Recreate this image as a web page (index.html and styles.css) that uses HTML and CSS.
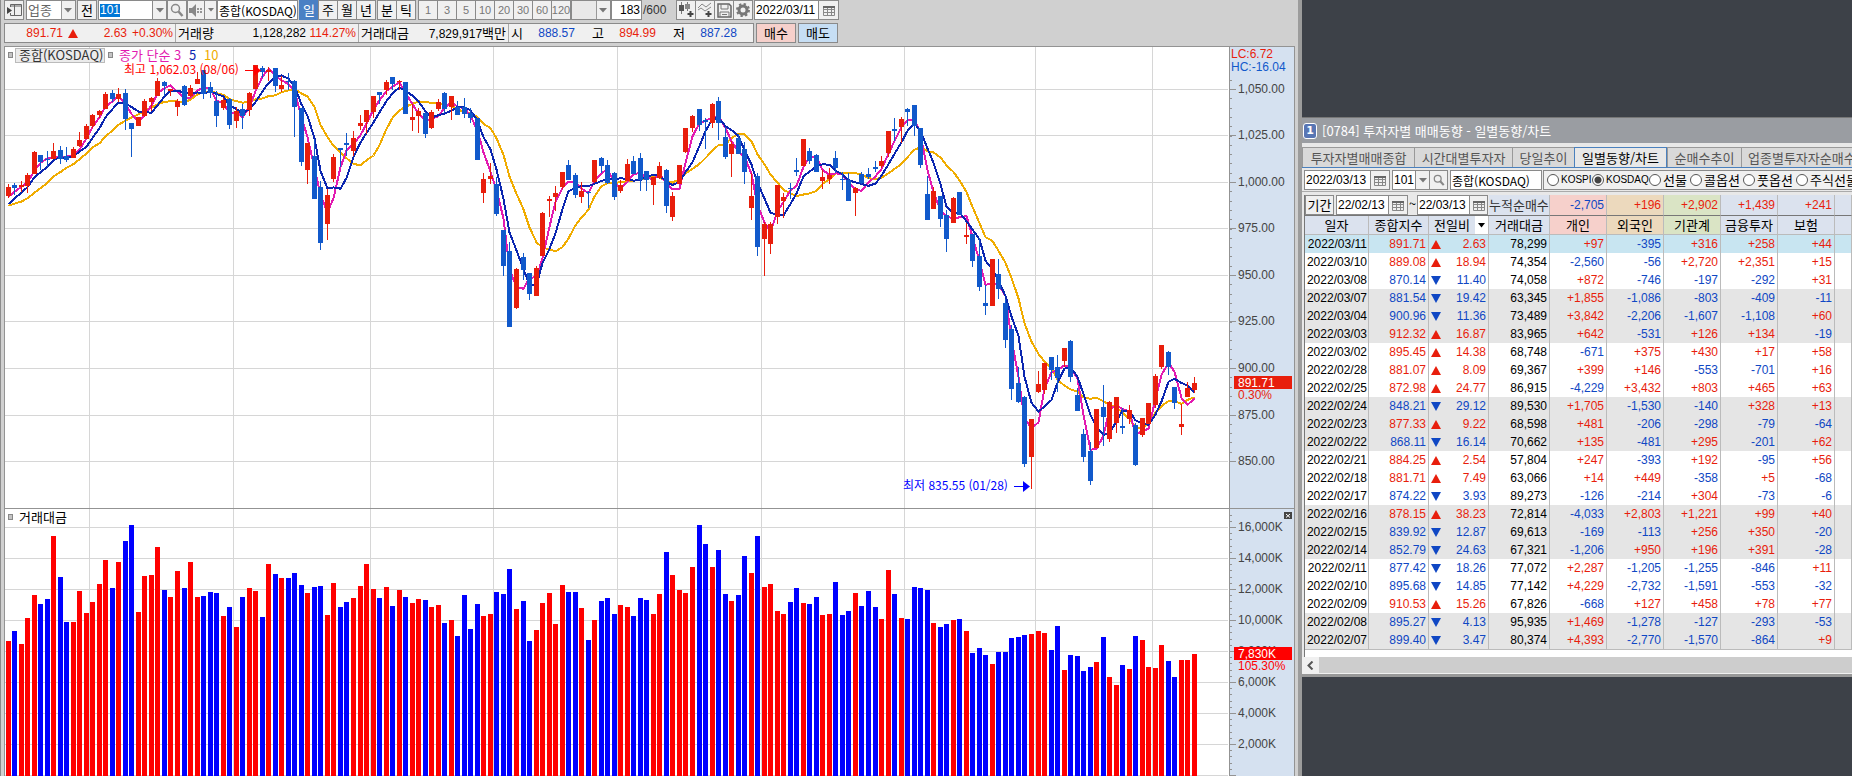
FILE: index.html
```html
<!DOCTYPE html>
<html lang="ko">
<head>
<meta charset="utf-8">
<title>종합(KOSDAQ) 차트</title>
<link rel="stylesheet" href="styles.css">
</head>
<body>
<main class="desk">
  <section class="chart-window" aria-label="업종 차트">
    <div class="toolbar">
      <button class="btn w20" aria-label="패널 열기"><svg width="15" height="14" viewBox="0 0 15 14"><path d="M3.500 4V1.500H14.500V12.500H3.500V10M7.500 2V12M3 3H15" fill="none" stroke="#666"/><path d="M0 4V11L5 7.500Z" fill="#444"/></svg></button>
      <select class="field pick w50 gap2 dim" aria-label="구분"><option>업종</option></select>
      <button class="btn w20 gap1">전</button>
      <input class="field code w55 gap1" aria-label="종목코드" value="101"><button class="btn w14 join" aria-label="코드 목록"><svg width="8" height="5" viewBox="0 0 8 5"><path d="M0 0H8L4 4.500Z" fill="#777"/></svg></button>
      <button class="btn w20" aria-label="검색"><svg width="14" height="14" viewBox="0 0 14 14"><circle cx="5.500" cy="5.500" r="4" fill="none" stroke="#888" stroke-width="1.500"/><path d="M8.500 8.500L12.500 13" stroke="#888" stroke-width="2.500"/></svg></button>
      <button class="btn w18" aria-label="소리"><svg width="14" height="13" viewBox="0 0 14 13"><path d="M0 4H3L7 0V13L3 9H0Z" fill="#888"/><path d="M9 4V6M9 7V9M12 4V6M12 7V9" stroke="#777" stroke-width="1.500"/></svg></button><button class="btn w12 join" aria-label="소리 설정"><svg width="6" height="4" viewBox="0 0 6 4"><path d="M0 0H6L3 3.500Z" fill="#777"/></svg></button>
      <input class="field small w81" aria-label="종목명" value="종합(KOSDAQ)">
      <div class="group gap1"><button class="btn w20 on">일</button><button class="btn w20">주</button><button class="btn w20">월</button><button class="btn w20">년</button></div>
      <div class="group gap1"><button class="btn w20">분</button><button class="btn w20">틱</button></div>
      <div class="group gap2 minutes"><button class="btn w20">1</button><button class="btn w20">3</button><button class="btn w20">5</button><button class="btn w20">10</button><button class="btn w20">20</button><button class="btn w20">30</button><button class="btn w20">60</button><button class="btn w20">120</button></div>
      <select class="field pick empty w40" aria-label="주기"><option></option></select>
      <input class="field num right w31" aria-label="표시 개수" value="183"><span class="total">/600</span>
      <div class="group"><button class="btn w20" aria-label="지표 추가"><svg width="16" height="16" viewBox="0 0 16 16"><path d="M3.500 0V12M9.500 0V9" stroke="#777"/><path d="M1 3H6V9H1Z" fill="#555"/><path d="M7 2H12V7H7Z" fill="#888"/><path d="M12.500 9V15M9.500 12H15.500" stroke="#444" stroke-width="2"/></svg></button><button class="btn w20" aria-label="추세선 추가"><svg width="16" height="16" viewBox="0 0 16 16"><path d="M1 6L5 2L9 5L14 1M1 8L4 6L8 9L14 5" fill="none" stroke="#888"/><path d="M11.500 9V15M8.500 12H14.500" stroke="#444" stroke-width="2"/></svg></button><button class="btn w20" aria-label="저장"><svg width="15" height="15" viewBox="0 0 15 15"><path d="M1 1H12L14 3V14H1Z" fill="none" stroke="#666" stroke-width="1.500"/><path d="M4 1V6H11V1M3 14V9H12V14M5 11.500H10" fill="none" stroke="#777"/></svg></button><button class="btn w20" aria-label="설정"><svg width="14" height="14" viewBox="0 0 14 14"><circle cx="7" cy="7" r="4" fill="none" stroke="#777" stroke-width="3"/><circle cx="7" cy="7" r="6" fill="none" stroke="#777" stroke-width="2" stroke-dasharray="2.350 2.350"/></svg></button></div>
      <input class="field num w65 gap1" aria-label="날짜" value="2022/03/11"><button class="btn w20 join" aria-label="달력"><svg width="12" height="11" viewBox="0 0 12 11"><path d="M.500 1V10.500H11.500V1M.500 4.500H11.500M.500 7.500H11.500M4.500 3V10M8.500 3V10" fill="none" stroke="#888"/><path d="M0 1H12V3H0Z" fill="#666"/></svg></button>
    </div>
    <div class="quote-row">
      <div class="quote">
        <span class="up q58">891.71</span><svg class="quote-mark" width="10" height="9" viewBox="0 0 10 9"><path d="M5 0L10 9H0Z" fill="#e81e0c"/></svg><span class="up q49">2.63</span><span class="up q49 cut">+0.30%</span>
        <b class="q39">거래량</b><span class="q91">1,128,282</span><span class="up q53 cut">114.27%</span>
        <b class="q50">거래대금</b><span class="q100 cut">7,829,917<b>백만</b></span>
        <b>시</b><span class="down q52">888.57</span><b class="wide">고</b><span class="up q52">894.99</span><b class="wide">저</b><span class="down q52">887.28</span>
      </div>
      <button class="trade buy">매수</button>
      <button class="trade sell">매도</button>
    </div>
    <svg class="chart" id="chart" viewBox="4 46 1291 730" role="img" aria-label="종합(KOSDAQ) 일봉과 거래대금">
      <rect x="4" y="46" width="1291" height="730" fill="#fff"/>
      <rect x="1230" y="46" width="64" height="730" fill="#d5e1f0"/>
      <g id="grid" class="crisp"></g>
      <g id="volume" class="crisp"></g>
      <g id="averages" class="crisp averages"></g>
      <g id="candles" class="crisp"></g>
      <g class="crisp" fill="#939393">
        <rect x="4" y="46" width="1291" height="1"/><rect x="4" y="46" width="1" height="730"/>
        <rect x="1294" y="46" width="1" height="730"/><rect x="1229" y="46" width="1" height="730"/>
        <rect x="5" y="508" width="1290" height="1"/>
      </g>
      <g class="crisp" fill="#c4c4c4" stroke="#888">
        <rect x="8.500" y="52.500" width="4" height="5"/><rect x="108.500" y="52.500" width="4" height="5"/><rect x="8.500" y="514.500" width="4" height="5"/>
        <rect x="15.500" y="48.500" width="89" height="14" fill="#ebebeb" stroke="#bbb"/>
      </g>
      <text class="legend" x="19" y="60" fill="#333">종합(KOSDAQ)</text>
      <text class="legend" x="119" y="60" fill="#e21ab0">종가 단순 3</text>
      <text class="legend" x="189" y="60" fill="#0b26b0">5</text>
      <text class="legend" x="204" y="60" fill="#f0ac00">10</text>
      <text class="note" x="124" y="74" fill="#f00">최고 1,062.03 (08/06)</text>
      <path d="M245 70.500H256" stroke="#f00"/><path d="M254 65L261 70.500L254 76Z" fill="#f00"/>
      <text class="note" x="903" y="490" fill="#00f">최저 835.55 (01/28)</text>
      <path d="M1014 486.500H1025" stroke="#00f"/><path d="M1023 481L1030 486.500L1023 492Z" fill="#00f"/>
      <text class="legend" x="19" y="522" fill="#000">거래대금</text>
      <g id="axis" class="axis"></g>
      <text class="axis-text" x="1231" y="58" fill="#e81e0c">LC:6.72</text>
      <text class="axis-text" x="1231" y="71" fill="#1159cb">HC:-16.04</text>
      <rect x="1234" y="376" width="58" height="13" fill="#e81e0c"/>
      <text class="axis-text" x="1238" y="387" fill="#fff">891.71</text>
      <text class="axis-text" x="1238" y="399" fill="#e81e0c">0.30%</text>
      <rect x="1234" y="647" width="58" height="13" fill="#f00"/>
      <text class="axis-text" x="1238" y="658" fill="#fff">7,830K</text>
      <text class="axis-text" x="1238" y="670" fill="#f00">105.30%</text>
      <rect x="1284" y="512" width="8" height="7" fill="#444"/><path d="M1286 514L1290 517.500M1290 514L1286 517.500" stroke="#fff"/>
    </svg>
  </section>

  <section class="side">
    <div class="trend-window">
      <h1 class="title"><span class="badge">1</span>[0784] 투자자별 매매동향 - 일별동향/차트</h1>
      <nav class="tabs">
        <button class="tab t112">투자자별매매종합</button><button class="tab t98">시간대별투자자</button><button class="tab t62">당일추이</button><button class="tab t92 current">일별동향/차트</button><button class="tab t74">순매수추이</button><button class="tab last">업종별투자자순매수</button>
      </nav>
      <div class="filters">
        <input class="field num w67" aria-label="기준일" value="2022/03/13"><button class="btn w19 join" aria-label="기준일 달력"><svg width="12" height="11" viewBox="0 0 12 11"><path d="M.500 1V10.500H11.500V1M.500 4.500H11.500M.500 7.500H11.500M4.500 3V10M8.500 3V10" fill="none" stroke="#888"/><path d="M0 1H12V3H0Z" fill="#666"/></svg></button>
        <input class="field num w24 gap2" aria-label="업종코드" value="101"><button class="btn w14 join" aria-label="업종 목록"><svg width="8" height="5" viewBox="0 0 8 5"><path d="M0 0H8L4 4.500Z" fill="#777"/></svg></button><button class="btn w18 join" aria-label="업종 검색"><svg width="12" height="12" viewBox="0 0 14 14"><circle cx="5.500" cy="5.500" r="4" fill="none" stroke="#888" stroke-width="1.500"/><path d="M8.500 8.500L12.500 13" stroke="#888" stroke-width="2.500"/></svg></button>
        <input class="field small w92 gap2" aria-label="업종명" value="종합(KOSDAQ)">
        <div class="radios gap1">
          <label class="latin r46"><input type="radio" name="market">KOSPI</label><label class="latin r54"><input type="radio" name="market" checked>KOSDAQ</label><label class="r41"><input type="radio" name="market">선물</label><label class="r53"><input type="radio" name="market">콜옵션</label><label class="r53"><input type="radio" name="market">풋옵션</label><label><input type="radio" name="market">주식선물</label>
        </div>
      </div>
      <div class="table-wrap">
      <table class="trend">
        <colgroup><col class="c64"><col class="c60"><col class="c60"><col class="c61"><col class="c57"><col class="c57"><col class="c57"><col class="c57"><col class="c57"><col></colgroup>
        <thead>
          <tr class="sums">
            <td colspan="3" class="period"><div class="period-row"><button class="btn w29">기간</button><input class="field num w53 gap2" aria-label="시작일" value="22/02/13"><button class="btn w19 join" aria-label="시작일 달력"><svg width="12" height="11" viewBox="0 0 12 11"><path d="M.500 1V10.500H11.500V1M.500 4.500H11.500M.500 7.500H11.500M4.500 3V10M8.500 3V10" fill="none" stroke="#888"/><path d="M0 1H12V3H0Z" fill="#666"/></svg></button><span class="tilde">~</span><input class="field num w53" aria-label="종료일" value="22/03/13"><button class="btn w18 join" aria-label="종료일 달력"><svg width="12" height="11" viewBox="0 0 12 11"><path d="M.500 1V10.500H11.500V1M.500 4.500H11.500M.500 7.500H11.500M4.500 3V10M8.500 3V10" fill="none" stroke="#888"/><path d="M0 1H12V3H0Z" fill="#666"/></svg></button></div></td>
            <td class="sum-label">누적순매수</td><td class="pink down">-2,705</td><td class="tan up">+196</td><td class="green up">+2,902</td><td class="up">+1,439</td><td class="up">+241</td><td></td>
          </tr>
          <tr class="heads">
            <th>일자</th><th>종합지수</th><th class="diff"><div class="diff-row"><span>전일비</span><button class="drop" aria-label="전일비 선택"><svg width="7" height="5" viewBox="0 0 7 5"><path d="M0 0H7L3.500 4.500Z" fill="#000"/></svg></button></div></th><th>거래대금</th><th class="pink">개인</th><th class="tan">외국인</th><th class="green">기관계</th><th>금융투자</th><th>보험</th><th></th>
          </tr>
        </thead>
        <tbody id="rows"></tbody>
      </table>
      </div>
      <div class="scroll"><button class="scroll-btn" aria-label="왼쪽으로"><svg width="7" height="9" viewBox="0 0 7 9"><path d="M5.500 .500L1.500 4.500L5.500 8.500" fill="none" stroke="#555" stroke-width="2"/></svg></button></div>
    </div>
  </section>
</main>
<script src="app.js"></script>
</body>
</html>
```
FILE: styles.css
```css
:root {
  --num: "Liberation Sans", "Noto Sans CJK KR", sans-serif;
  --ko: "Noto Sans CJK KR", sans-serif;
  --up: #e81e0c;
  --down: #0f47c4;
  --edge: #8a8a8a;
}
* { box-sizing: border-box; }
body { margin: 0; background: #3d4148; font-family: var(--ko); font-size: 13px; color: #000; }
input, button, select { font-family: inherit; font-size: inherit; color: inherit; margin: 0; }
.desk { display: grid; grid-template-columns: 1302fr 550fr; min-height: 100vh; }
.up { color: var(--up); }
.down { color: var(--down); }

.chart-window { min-width: 0; background: #d0d0d0; border-left: 1px solid #8c8c8c; border-right: 4px solid #9c9c9c; padding: 0 3px; overflow: hidden; }
.toolbar { display: flex; height: 20px; }
.group { display: flex; }
.group .btn + .btn { margin-left: -1px; }
.btn { flex: none; height: 20px; padding: 0; display: flex; align-items: center; justify-content: center; background: #f0f0f0; border: 1px solid var(--edge); line-height: 16px; }
.btn.on { background: #4a80c4; color: #fff; border-color: #4a80c4; }
.join { border-left-width: 0; }
.minutes .btn { color: #777; font-family: var(--num); font-size: 11px; }
.field { flex: none; height: 20px; padding: 0 1px; background: #fff; border: 1px solid var(--edge); border-radius: 0; line-height: 16px; }
.num { font-family: var(--num); font-size: 12px; }
.small { font-size: 12px; }
.right { text-align: right; }
.dim { color: #666; }
.pick { appearance: none; background: #fff url("data:image/svg+xml,%3Csvg xmlns='http://www.w3.org/2000/svg' width='14' height='18'%3E%3Cpath d='M0 0H14V18H0Z' fill='%23f0f0f0'/%3E%3Cpath d='M0 0H1V18H0Z' fill='%23999'/%3E%3Cpath d='M3 7H11L7 11.500Z' fill='%23777'/%3E%3C/svg%3E") no-repeat right top / 14px 18px; }
.empty { background-color: #e9e9e9; }
.code { font-family: var(--num); font-size: 12px; color: #fff; background: linear-gradient(#0078d7, #0078d7) no-repeat 1px 3px / 20px 13px #fff; }
.total { width: 34px; padding-left: 1px; line-height: 20px; color: #333; font-family: var(--num); font-size: 12px; }
.gap1 { margin-left: 1px; }
.gap2 { margin-left: 2px; }
.w12 { width: 12px; } .w14 { width: 14px; } .w18 { width: 18px; } .w19 { width: 19px; } .w20 { width: 20px; }
.w24 { width: 24px; } .w29 { width: 29px; } .w31 { width: 31px; } .w40 { width: 40px; } .w50 { width: 50px; }
.w53 { width: 53px; } .w55 { width: 55px; } .w65 { width: 65px; } .w67 { width: 67px; } .w81 { width: 81px; } .w92 { width: 92px; }

.quote-row { display: flex; height: 20px; margin: 3px 0; gap: 2px; }
.quote { display: flex; align-items: center; width: 750px; border: 1px solid var(--edge); background: #f0f0f0; font-family: var(--num); font-size: 12px; line-height: 18px; }
.quote span { text-align: right; white-space: nowrap; height: 18px; }
.quote b { font-family: var(--ko); font-weight: 400; font-size: 13px; padding-left: 2px; white-space: nowrap; }
.quote span b { padding: 0; }
.quote .wide { padding-left: 17px; }
.quote-mark { margin-left: 5px; }
.cut { border-right: 1px solid #aaa; padding-right: 2px; }
.q39 { width: 39px; } .q49 { width: 49px; } .q50 { width: 50px; } .q52 { width: 52px; } .q53 { width: 53px; }
.q58 { width: 58px; } .q91 { width: 91px; } .q100 { width: 100px; }
.trade { width: 40px; height: 20px; padding: 0; border: 1px solid var(--edge); line-height: 16px; }
.buy { background: #f6d0cb; }
.sell { background: #c6def4; }

.chart { display: block; width: 100%; height: auto; }
.crisp { shape-rendering: crispEdges; }
.averages path { fill: none; stroke-width: 2; }
.legend { font-family: var(--ko); font-size: 13px; }
.note { font-family: var(--ko); font-size: 12px; }
.axis text, .axis-text { font-family: var(--num); font-size: 12px; }
.axis text { fill: #444; }

.side { min-width: 0; overflow: hidden; padding-top: 117px; }
.trend-window { background: #e8e8e8; border-top: 1px solid #777; border-bottom: 3px solid #989898; }
.title { margin: 0; height: 25px; padding-left: 1px; display: flex; align-items: center; gap: 5px; background: #9a9da2; color: #fff; font-size: 13px; font-weight: 400; white-space: nowrap; }
.badge { width: 14px; height: 16px; border: 1px solid #fff; border-radius: 3px; background: #5876b4; font: 700 11px/14px "DejaVu Sans", sans-serif; text-align: center; }
.tabs { display: flex; margin-top: 4px; height: 21px; border-bottom: 1px solid #4a80bd; overflow: hidden; }
.tab { flex: none; height: 21px; padding: 0; background: #d9d9d9; border: 1px solid #999; border-right: 0; border-bottom: 1px solid #4a80bd; color: #555; line-height: 18px; white-space: nowrap; }
.tab.current { background: #e8e8e8; border: 1px solid #4a80bd; border-bottom: 0; color: #000; }
.t62 { width: 62px; } .t74 { width: 74px; } .t92 { width: 93px; } .t98 { width: 98px; } .t112 { width: 112px; }
.tab.last { padding: 0 6px; border-right: 1px solid #999; }
.filters { display: flex; height: 24px; padding: 2px 0 0 2px; border-bottom: 1px solid #aaa; }
.radios { display: flex; flex: none; align-items: center; height: 20px; padding: 0 3px; border: 1px solid var(--edge); background: #f0f0f0; }
.radios label { display: flex; align-items: center; gap: 2px; white-space: nowrap; line-height: 16px; }
.radios .latin { font-family: var(--num); font-size: 10px; }
.radios input { flex: none; appearance: none; width: 12px; height: 12px; border: 1px solid #555; border-radius: 50%; background: #fff; }
.radios input:checked { background: radial-gradient(circle, #444 3px, #fff 4px); }
.r41 { width: 41px; } .r46 { width: 45px; } .r53 { width: 53px; } .r54 { width: 57px; }

.table-wrap { margin: 3px 0 0 2px; height: 462px; border-left: 1px solid #777; background: #fff; overflow: hidden; }
.trend { table-layout: fixed; width: 100%; border-collapse: separate; border-spacing: 0; font-family: var(--num); font-size: 12px; }
.trend td, .trend th { height: 18px; padding: 0 2px; border-right: 1px solid #bbb; text-align: right; line-height: 18px; font-weight: 400; white-space: nowrap; overflow: hidden; }
.trend td:first-child { padding: 0 1px; }
.trend thead td, .trend thead th { background: #dbe2ee; }
.trend .sums td { height: 21px; border-bottom: 1px solid #777; }
.trend .heads th { height: 19px; padding: 0; text-align: center; font-family: var(--ko); font-size: 13px; border-bottom: 1px solid #bbb; }
.trend thead .period { padding: 0; border-right: 0; background: #e8e8e8; }
.period-row { display: flex; height: 20px; font-family: var(--ko); font-size: 13px; }
.tilde { width: 9px; text-align: center; }
.trend .sum-label { font-family: var(--ko); font-size: 13px; padding: 0; text-align: left; color: #333; }
.trend thead .pink { background: #f6d0cb; }
.trend thead .tan { background: #ecd9bd; }
.trend thead .green { background: #dae4c5; }
.diff-row { display: flex; justify-content: space-between; padding-left: 5px; }
.drop { width: 13px; height: 18px; padding: 0; border: 0; background: #fff; }
.drop svg { display: block; margin: auto; }
.trend .today td { background: #c8e5f1; }
.shade td { background: #e5e5e5; }
.trend tbody tr:last-child td { border-bottom: 1px solid #bbb; }
.change { display: flex; align-items: center; justify-content: space-between; }
.c57 { width: 57px; } .c60 { width: 60px; } .c61 { width: 61px; } .c64 { width: 64px; }
.scroll { height: 17px; background: #cdcdcd; border-bottom: 1px solid #f0f0f0; }
.scroll-btn { display: block; width: 17px; height: 16px; padding: 0; border: 0; background: #f0f0f0; }
.scroll-btn svg { display: block; margin: auto; }
```
FILE: app.js
```js
const RED = '#e81e0c', BLUE = '#1159cb';
const NS = 'http://www.w3.org/2000/svg';
const byId = id => document.getElementById(id);

function add(parent, name, attrs, text) {
  const el = document.createElementNS(NS, name);
  for (const key in attrs) el.setAttribute(key, attrs[key]);
  if (text) el.textContent = text;
  parent.appendChild(el);
}
const box = (parent, x, y, w, h, fill) => add(parent, 'rect', { x, y, width: w, height: h, fill });
const barX = i => Math.floor(6 + i * 6.519);

/* Each candle: direction, then high, body top, body bottom, low; three units per pixel under the base line. */
const segments = [
  { base: 40, data: `R432,441,467,473 B430,435,443,465 R423,435,440,455 R400,405,437,459 R333,336,402,402 B346,346,366,390 B333,357,361,381 R309,333,356,356 B318,330,356,372 B321,348,360,366
R321,327,353,353 R276,300,318,320 R252,258,297,297 R222,225,257,264 R210,213,225,233 R156,162,207,207 B150,159,177,186 R144,162,177,186 B147,159,237,270 B249,249,267,351
R231,231,258,258 R177,183,228,231 R171,174,185,212 R114,123,168,168 B123,126,137,168 R147,147,153,168 R177,183,201,228 B135,138,195,198 R135,144,168,171 R96,117,132,132
B90,90,161,177 B126,141,159,174 B153,183,228,261 R174,180,204,210 B174,177,255,267 R201,213,243,264 B192,207,228,267 R156,159,210,228 R75,75,147,147 B78,84,95,113
R81,90,95,123 B84,84,137,155 R108,135,147,156 B99,122,125,150 B120,123,201,291 B204,204,366,378 R309,309,390,432 B297,348,477,477 B423,441,609,630 R447,465,552,600
R342,351,417,426 B324,325,329,381 B279,310,314,348 R273,294,333,348 R225,249,258,270 R210,210,246,282 R168,168,216,234 B155,156,164,192 R120,126,150,165 B111,111,132,150
R120,123,127,150 B126,126,222,222 R192,231,240,273 R204,213,228,279 B216,219,282,294 R210,216,264,267 R177,186,207,213 B156,159,207,219 R168,168,201,240 B183,201,225,225
B174,201,222,234 B204,219,234,249 B234,234,360,360 R399,417,459,489 R369,408,417,432 B411,432,522,528 B570,570,678,708 B606,633,861,861 R684,687,804,807 B639,651,690,720
B699,699,762,780 R678,684,768,768 R516,519,648,648 R468,477,482,531 R438,459,471,513 R396,396,441,446 B360,375,420,420 B399,405,465,474 R426,453,471,489 B453,455,459,504
R360,360,426,429 B351,354,378,399 B360,375,429,432 B396,399,471,480 R420,435,453,459 R357,372,423,423 B348,363,402,402 B339,354,420,453 B393,393,420,453 R411,411,435,495
R366,378,413,416 B387,390,498,519 R456,468,531,543 R375,375,432,432 R264,264,336,339 R225,228,264,276 B207,207,255,273 B234,240,246,327 R189,192,249,264 B171,183,249,300
B261,291,351,357 R303,312,342,411 B282,294,342,342 B306,327,396,432 R399,468,504,540 B399,408,621,648 R546,552,598,708 R546,552,612,642 R435,435,531,552 R459,471,483,534
B429,444,447,477 B354,390,396,408 R297,297,378,378 B324,333,363,372 B342,345,396,396 R390,411,423,447 R384,405,417,432 B333,354,384,399 B396,418,420,450 B399,420,483,483
R441,444,459,528 B396,402,429,432 B384,402,411,417 B363,381,387,396 R348,363,378,384 R273,273,339,351 B234,267,273,303 R231,237,261,309 B204,207,216,258 B195,195,258,288
B264,264,375,384 B408,462,540,540 R441,453,507,507 B468,468,537,561 B510,525,597,636 R471,474,549,549 B456,456,525,525 R549,585,591,612 B582,582,663,681 B594,648,741,753
B735,789,798,825 R657,657,798,798 B657,702,747,777 B777,789,900,924` },
  { base: 320, data: `B15,27,207,240 B141,189,246,249 B228,231,432,441 R297,297,411,507 R153,192,216,219 R129,129,210,222 B111,111,150,180 B105,141,174,216 R84,84,123,141 B60,63,171,186
B204,225,273,273 B327,342,411,426 B366,393,483,495 R267,267,384,384 B195,261,291,378 R243,246,357,366 R231,231,309,339 B264,318,324,342 R255,270,297,312 B309,315,435,438
R294,294,345,351 R249,249,312,312 R162,168,255,264 R75,75,141,147 B93,96,141,165 B201,201,249,267 R252,312,321,345 R186,204,231,231 R171,189,210,219` }
];
const candles = segments.flatMap(s => s.data.split(/\s+/).map(t => {
  const [high, top, bottom, low] = t.slice(1).split(',').map(v => s.base + v / 3);
  return { up: t[0] === 'R', high, top, bottom, low, close: t[0] === 'R' ? top : bottom };
}));

/* Volume bars: colour and top edge, three units per pixel under y = 500. */
const volumes = `R423 B393 R432 R354 R285 B312 B297 R108 B231 B366 R366 R273 R339 R306 R252 R180 B264 R186 B123 B75
R336 R228 R225 R141 B270 R291 R213 B264 R186 R291 B288 B276 B279 R348 B321 R381 B291 R264 R273 B351
R192 B222 R234 B234 B219 B255 R279 B261 B258 R345 R249 B321 B306 R294 R258 R192 R267 B294 R261 B318
R270 B291 R309 R297 B300 R321 R315 B369 R360 B408 B285 B387 B312 R348 R342 B276 B282 B207 R327 B303
B423 R390 R309 R279 R372 R255 B276 B276 R324 B420 R360 B303 B294 B342 R315 R321 B348 B294 B300 R342
R282 B156 R225 R270 R279 R201 B75 B132 R201 B150 B282 R303 B285 B168 R219 B108 R261 R252 R333 R342
B306 B264 R309 B312 B291 R345 R342 B246 B345 B333 R279 B318 B273 B321 R357 R210 B282 R354 B357 B261
B264 B270 R369 B381 B372 R360 B357 R393 B459 B444 B465 R492 B456 B456 B414 B411 B405 R402 R393 R399
B450 B378 R510 B465 B468 B513 B501 R486 B411 R531 R555 B495 R507 B408 R420 R501 R504 R435 B483 B531
R480 R480 R462`.split(/\s+/);

const grid = byId('grid'), axis = byId('axis');
const priceLines = [[89, '1,050.00'], [135, '1,025.00'], [182, '1,000.00'], [228, '975.00'], [275, '950.00'], [321, '925.00'], [368, '900.00'], [415, '875.00'], [461, '850.00']];
const volumeLines = [[527, '16,000K'], [558, '14,000K'], [589, '12,000K'], [620, '10,000K'], [651, '8,000K'], [682, '6,000K'], [713, '4,000K'], [744, '2,000K'], [775, '']];
[89, 233, 370, 493, 617, 761, 904, 1035, 1152].forEach(x => box(grid, x, 47, 1, 729, '#d6d6d6'));
[...priceLines, ...volumeLines].forEach(([y, label]) => {
  box(grid, 5, y, 1223, 1, '#d6d6d6');
  box(grid, 1230, y, 6, 1, '#939393');
  add(axis, 'text', { x: 1238, y: y + 4 }, label);
});
for (let k = -1; k <= 40; k++) box(grid, 1230, Math.round(89 + k * 9.3), 2, 1, '#939393');
for (let k = -3; k <= 40; k++) box(grid, 1230, Math.round(527 + k * 6.2), 2, 1, '#939393');

volumes.forEach((v, i) => {
  const top = 500 + v.slice(1) / 3;
  box(byId('volume'), barX(i), top, 5, 776 - top, v[0] === 'R' ? '#f00' : '#00f');
});

/* Closes of the nine sessions before the first visible candle. */
const earlier = [502, 502, 502, 502, 502, 525, 525, 485, 484].map(v => 40 + v / 3);
const closes = [...earlier, ...candles.map(c => c.close)];
[[10, '#f0ac00'], [3, '#e21ab0'], [5, '#0b26b0']].forEach(([n, stroke]) => {
  const points = candles.map((c, i) => {
    const end = i + earlier.length + 1;
    const mean = closes.slice(end - n, end).reduce((a, b) => a + b) / n;
    return (barX(i) + 2.5) + ' ' + mean.toFixed(1);
  });
  add(byId('averages'), 'path', { d: 'M' + points.join('L'), stroke });
});

candles.forEach((c, i) => {
  const x = barX(i), fill = c.up ? RED : BLUE, g = byId('candles');
  const top = Math.round(c.top), high = Math.round(c.high);
  box(g, x + 2, high, 1, Math.round(c.low) - high, fill);
  box(g, x, top, 5, Math.max(1, Math.round(c.bottom) - top), fill);
});

const rows = `03/11 891.71 u 2.63 78,299 +97 -395 +316 +258 +44
03/10 889.08 u 18.94 74,354 -2,560 -56 +2,720 +2,351 +15
03/08 870.14 d 11.40 74,058 +872 -746 -197 -292 +31
03/07 881.54 d 19.42 63,345 +1,855 -1,086 -803 -409 -11
03/04 900.96 d 11.36 73,489 +3,842 -2,206 -1,607 -1,108 +60
03/03 912.32 u 16.87 83,965 +642 -531 +126 +134 -19
03/02 895.45 u 14.38 68,748 -671 +375 +430 +17 +58
02/28 881.07 u 8.09 69,367 +399 +146 -553 -701 +16
02/25 872.98 u 24.77 86,915 -4,229 +3,432 +803 +465 +63
02/24 848.21 d 29.12 89,530 +1,705 -1,530 -140 +328 +13
02/23 877.33 u 9.22 68,598 +481 -206 -298 -79 -64
02/22 868.11 d 16.14 70,662 +135 -481 +295 -201 +62
02/21 884.25 u 2.54 57,804 +247 -393 +192 -95 +56
02/18 881.71 u 7.49 63,066 +14 +449 -358 +5 -68
02/17 874.22 d 3.93 89,273 -126 -214 +304 -73 -6
02/16 878.15 u 38.23 72,814 -4,033 +2,803 +1,221 +99 +40
02/15 839.92 d 12.87 69,613 -169 -113 +256 +350 -20
02/14 852.79 d 24.63 67,321 -1,206 +950 +196 +391 -28
02/11 877.42 d 18.26 77,072 +2,287 -1,205 -1,255 -846 +11
02/10 895.68 d 14.85 77,142 +4,229 -2,732 -1,591 -553 -32
02/09 910.53 u 15.26 67,826 -668 +127 +458 +78 +77
02/08 895.27 d 4.13 95,935 +1,469 -1,278 -127 -293 -53
02/07 899.40 d 3.47 80,374 +4,393 -2,770 -1,570 -864 +9`.split('\n');
byId('rows').innerHTML = rows.map((line, i) => {
  const [date, index, dir, diff, amount, ...flows] = line.split(' ');
  const tone = dir === 'u' ? 'up' : 'down';
  const mark = dir === 'u' ? 'M5 0L10 9H0Z' : 'M0 0H10L5 9Z';
  const row = i === 0 ? 'today' : Math.floor(i / 3) % 2 ? 'shade' : '';
  return `<tr class="${row}"><td>2022/${date}</td><td class="${tone}">${index}</td>` +
    `<td class="${tone}"><div class="change"><svg width="10" height="9" viewBox="0 0 10 9"><path d="${mark}" fill="currentColor"/></svg>${diff}</div></td>` +
    `<td>${amount}</td>` + flows.map(f => `<td class="${f[0] === '+' ? 'up' : 'down'}">${f}</td>`).join('') + '<td></td></tr>';
}).join('');
```
